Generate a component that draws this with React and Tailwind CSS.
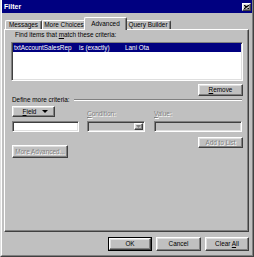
const raised =
  "border border-t-white border-l-white border-r-[#404040] border-b-[#404040] shadow-[inset_-1px_-1px_0_#808080,inset_1px_1px_0_#dfdfdf] bg-[#c0c0c0]";
const sunken =
  "border border-t-[#808080] border-l-[#808080] border-b-white border-r-white shadow-[inset_1px_1px_0_#404040,inset_-1px_-1px_0_#dfdfdf]";
const disabledText = "text-[#808080] [text-shadow:1px_1px_0_#ffffff]";

function Tab({ label, width, active }) {
  if (active) {
    return (
      <div
        className={`relative z-10 -mx-[2px] -mb-px h-[13px] ${width} flex items-start justify-center pt-[2px] bg-[#c0c0c0] border-t border-l border-r border-t-white border-l-white border-r-[#404040] shadow-[inset_-1px_0_0_#808080] rounded-t-[2px]`}
      >
        {label}
      </div>
    );
  }
  return (
    <div
      className={`h-[9px] ${width} flex items-center justify-center border-t border-l border-r border-t-white border-l-white border-r-[#404040] shadow-[inset_-1px_0_0_#808080] rounded-t-[2px]`}
    >
      {label}
    </div>
  );
}

function Button({ children, className = "", disabled }) {
  return (
    <div
      className={`${raised} flex items-center justify-center ${
        disabled ? disabledText : "text-black"
      } ${className}`}
    >
      {children}
    </div>
  );
}

export default function App() {
  return (
    <div
      className="w-[254px] h-[257px] bg-[#c0c0c0] border-l border-r border-b border-l-[#dfdfdf] border-r-[#404040] border-b-[#404040] text-[6.4px] leading-[8px] text-black"
      style={{ fontFamily: "'Liberation Sans', Arial, sans-serif" }}
    >
      <div className="h-full flex flex-col border-l border-r border-b border-l-white border-r-[#808080] border-b-[#808080]">
        {/* Title bar */}
        <div className="h-[13px] bg-[#000080] flex items-center justify-between pl-[2px] pr-[1px]">
          <span className="text-white font-bold text-[7px]">Filter</span>
          <div className={`${raised} w-[9px] h-[8px] flex items-center justify-center`}>
            <svg width="5" height="4" viewBox="0 0 5 4">
              <path d="M0 0L5 4M5 0L0 4" stroke="#000" strokeWidth="1.1" />
            </svg>
          </div>
        </div>

        {/* Tabs */}
        <div className="mt-[4px] h-[12px] flex items-end pl-[3px]">
          <Tab label="Messages" width="w-[37px]" />
          <Tab label="More Choices" width="w-[44px]" />
          <Tab label="Advanced" width="w-[43px]" active />
          <Tab label="Query Builder" width="w-[46px]" />
        </div>

        {/* Tab panel */}
        <div className="ml-[2px] w-[245px] h-[203px] border border-t-white border-l-white border-r-[#404040] border-b-[#404040] shadow-[inset_-1px_-1px_0_#808080] pl-[6px] flex flex-col">
          <div className="mt-[1px] ml-[4px] h-[8px]">
            Find items that <span className="underline">m</span>atch these criteria:
          </div>

          <div className={`mt-[3px] w-[232px] h-[39px] bg-white ${sunken}`}>
            <div className="mx-[1px] h-[9px] bg-[#000080] text-white flex items-center">
              <span className="w-[66px] pl-px">txtAccountSalesRep</span>
              <span className="w-[46px]">is (exactly)</span>
              <span>Lani Ota</span>
            </div>
          </div>

          <Button className="mt-[3px] self-start ml-[187px] w-[45px] h-[12px]">
            <span>
              <span className="underline">R</span>emove
            </span>
          </Button>

          <div className="h-[7px] flex items-center ml-[1px]">
            <span>Define more criteria:</span>
            <div className="ml-[4px] w-[168px] h-[2px] border-t border-b border-t-[#808080] border-b-white" />
          </div>

          <div className="mt-[3px] flex items-end ml-[1px]">
            <div className="w-[67px]">
              <Button className="w-[43px] h-[11px] gap-[6px] pl-[4px]">
                <span>
                  <span className="underline">F</span>ield
                </span>
                <svg width="6" height="3" viewBox="0 0 6 3">
                  <path d="M0 0H6L3 3Z" fill="#000" />
                </svg>
              </Button>
            </div>
            <div className={`ml-[8px] w-[58px] ${disabledText} leading-[7px]`}>
              <span className="underline">C</span>ondition:
            </div>
            <div className={`ml-[9px] ${disabledText} leading-[7px]`}>
              <span className="underline">V</span>alue:
            </div>
          </div>

          <div className="mt-[4px] flex ml-[1px]">
            <div className={`w-[67px] h-[11px] bg-white ${sunken}`} />
            <div className={`ml-[8px] w-[58px] h-[11px] ${sunken} flex justify-end p-px`}>
              <div className={`${raised} w-[9px] h-full flex items-center justify-center`}>
                <svg width="5" height="3" viewBox="0 0 5 3">
                  <path d="M0 0H5L2.5 3Z" fill="#808080" />
                </svg>
              </div>
            </div>
            <div className={`ml-[9px] w-[88px] h-[11px] ${sunken}`} />
          </div>

          <div className="mt-[5px] flex items-start ml-[1px]">
            <Button disabled className="mt-[8px] w-[56px] h-[13px]">
              More Advanced...
            </Button>
            <Button disabled className="ml-[130px] w-[45px] h-[11px]">
              Add to List
            </Button>
          </div>
        </div>

        {/* Dialog buttons */}
        <div className="mt-[5px] h-[14px] flex justify-end gap-[4px] pr-[3px]">
          <div className="w-[44px] h-[14px] border border-black">
            <Button className="w-full h-full">OK</Button>
          </div>
          <Button className="w-[45px] h-[14px]">Cancel</Button>
          <Button className="w-[44px] h-[14px]">
            <span>
              Clear <span className="underline">A</span>ll
            </span>
          </Button>
        </div>
      </div>
    </div>
  );
}
